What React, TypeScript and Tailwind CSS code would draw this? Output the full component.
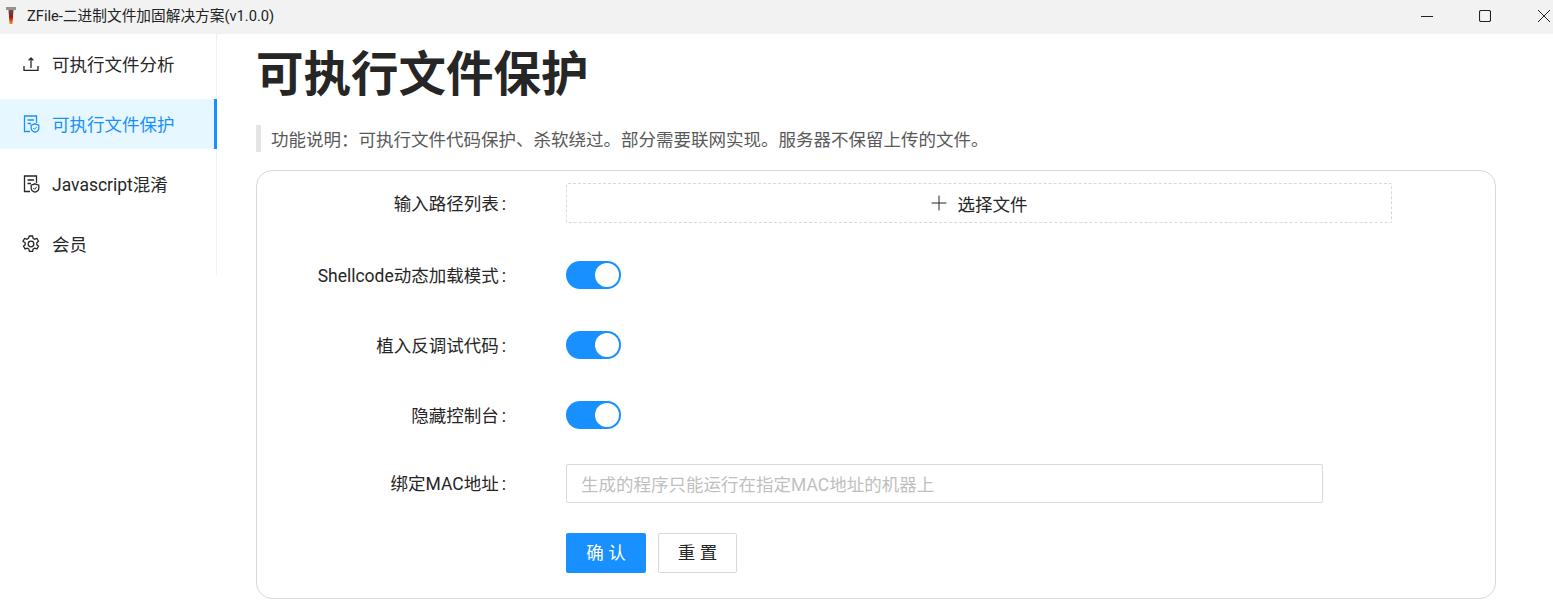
import { Plus } from 'lucide-react'

const FONT = 'font-["Roboto","Noto_Sans_CJK_SC",sans-serif]'

const UploadIcon = () => (
  <svg width="16" height="15" viewBox="0 0 16 15" fill="none" stroke="currentColor" strokeWidth="1.3">
    <path d="M8 11V1M5.600 3.400L8 1l2.400 2.400M1 9v4.400h14V9" />
  </svg>
)

const FileIcon = () => (
  <svg width="17" height="18" viewBox="0 0 17 18" fill="none" stroke="currentColor" strokeWidth="1.3">
    <path d="M7 16.500H1.500V1h12v7M4.500 5h6.500M4.500 8.500h3.500" />
    <path d="M12 8.800l3.800 1.400v3c0 1.900-1.700 3.200-3.800 4-2.100-.8-3.800-2.100-3.800-4v-3z" />
    <path d="M10.300 13l1.300 1.300 2.100-2.400" strokeWidth="1" />
  </svg>
)

const SettingIcon = () => (
  <svg width="18" height="18" viewBox="0 0 18 18" fill="none" stroke="currentColor" strokeWidth="1.3">
    <path d="M7.400 1h3.200l.5 2.300 1.500.9 2.300-.7 1.600 2.700-1.700 1.600v1.800l1.700 1.600-1.600 2.700-2.300-.7-1.500.9-.5 2.300H7.400l-.5-2.300-1.500-.9-2.300.7-1.600-2.700 1.700-1.600V7.800L1 6.200l1.600-2.700 2.300.7 1.500-.9z" />
    <circle cx="9" cy="9" r="2.800" />
  </svg>
)

const menu = [
  { label: '可执行文件分析', icon: <UploadIcon /> },
  { label: '可执行文件保护', icon: <FileIcon />, active: true },
  { label: 'Javascript混淆', icon: <FileIcon /> },
  { label: '会员', icon: <SettingIcon /> },
]

const Toggle = () => (
  <div className="flex h-[28px] w-[55px] items-center justify-end rounded-full bg-[#1890ff] pr-[2px]">
    <div className="h-[24px] w-[24px] rounded-full bg-white" />
  </div>
)

const Row = ({ label, children, className }: { label: string; children: React.ReactNode; className: string }) => (
  <div className={`flex items-center ${className}`}>
    <div className="w-[250px] pt-[2px] pr-[1px] text-right text-[17.500px] text-[#262626]">
      {label}
      <span className="ml-[3px]">:</span>
    </div>
    <div className="ml-[59px] flex-1">{children}</div>
  </div>
)

export default function App() {
  return (
    <div className={`flex h-[610px] flex-col overflow-hidden bg-white ${FONT}`}>
      <div className="flex h-[34px] shrink-0 items-center bg-[#f2f2f2] pb-[3px]">
        <svg className="ml-[6px]" width="10" height="17" viewBox="0 0 10 17">
          <defs>
            <linearGradient id="logo" x1="0" y1="0" x2="0" y2="1">
              <stop offset="0" stopColor="#555" />
              <stop offset="0.5" stopColor="#a01510" />
              <stop offset="1" stopColor="#f59020" />
            </linearGradient>
          </defs>
          <path d="M0 0h10v3H0z" fill="#9a9088" />
          <path d="M2.500 3h5l-1 14h-3z" fill="url(#logo)" />
        </svg>
        <span className="ml-[11px] pt-[1px] text-[14.700px] text-[#222]">ZFile-二进制文件加固解决方案(v1.0.0)</span>
        <div className="ml-auto flex items-center text-[#222]">
          <svg className="mr-[46px]" width="12" height="12" viewBox="0 0 12 12" stroke="currentColor" strokeWidth="1">
            <path d="M0 6.500h12" />
          </svg>
          <svg className="mr-[47px]" width="12" height="12" viewBox="0 0 12 12" fill="none" stroke="currentColor" strokeWidth="1.100">
            <rect x="0.500" y="0.500" width="11" height="11" rx="1.500" />
          </svg>
          <svg className="mr-[3px]" width="12" height="12" viewBox="0 0 12 12" stroke="currentColor" strokeWidth="1">
            <path d="M0 0l12 12M12 0L0 12" />
          </svg>
        </div>
      </div>
      <div className="flex min-h-0 flex-1">
        <div className="flex h-[241px] w-[217px] shrink-0 flex-col gap-[10px] border-r border-[#f0f0f0] pt-[5px]">
          {menu.map((item) => (
            <div
              key={item.label}
              className={`flex h-[50px] shrink-0 items-center pl-[22px] text-[17.500px] ${
                item.active ? '-mr-[1px] border-r-[3px] border-[#1890ff] bg-[#e6f7ff] text-[#1890ff]' : 'text-[#262626]'
              }`}>
              <span className="flex w-[18px] justify-center">{item.icon}</span>
              <span className="ml-[12px] pt-[2px]">{item.label}</span>
            </div>
          ))}
        </div>
        <div className="ml-[39px] w-[1240px]">
          <h1 className="mt-[6px] text-[47.500px] leading-[70px] font-bold text-[#262626]">可执行文件保护</h1>
          <div className="mt-[15px] h-[27px] border-l-[5px] border-[#e5e5e5] pl-[10px] text-[17.500px] leading-[30px] text-[#595959]">
            功能说明：可执行文件代码保护、杀软绕过。部分需要联网实现。服务器不保留上传的文件。
          </div>
          <div className="mt-[18px] h-[429px] rounded-[16px] border border-[#d9d9d9] pt-[12px]">
            <Row label="输入路径列表" className="h-[40px]">
              <div className="flex h-[40px] w-[826px] items-center justify-center rounded-[2px] border border-dashed border-[#d9d9d9] text-[17.500px] text-[#262626]">
                <Plus size={24} strokeWidth={1} />
                <span className="mr-[4px] ml-[7px] pt-[4px]">选择文件</span>
              </div>
            </Row>
            <Row label="Shellcode动态加载模式" className="mt-[32px] h-[40px]">
              <Toggle />
            </Row>
            <Row label="植入反调试代码" className="mt-[30px] h-[40px]">
              <Toggle />
            </Row>
            <Row label="隐藏控制台" className="mt-[30px] h-[40px]">
              <Toggle />
            </Row>
            <Row label="绑定MAC地址" className="mt-[29px] h-[39px]">
              <input
                className="h-[39px] w-[757px] rounded-[2px] border border-[#d9d9d9] px-[14px] pt-[2px] text-[17.500px] outline-none placeholder:text-[#bfbfbf]"
                placeholder="生成的程序只能运行在指定MAC地址的机器上"
              />
            </Row>
            <div className="mt-[30px] ml-[309px] flex gap-[12px]">
              <button className="h-[40px] w-[80px] rounded-[2px] bg-[#1890ff] text-[17.500px] text-white">确 认</button>
              <button className="h-[40px] w-[79px] rounded-[2px] border border-[#d9d9d9] text-[17.500px] text-[#262626]">重 置</button>
            </div>
          </div>
        </div>
      </div>
    </div>
  )
}
